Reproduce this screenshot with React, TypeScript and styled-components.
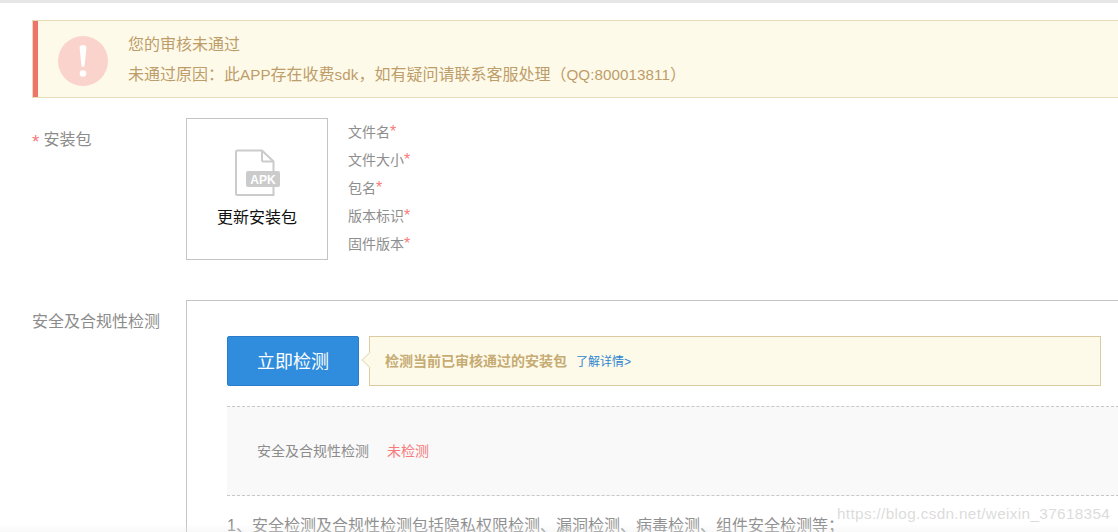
import React from "react";
import styled, { createGlobalStyle } from "styled-components";

const Global = createGlobalStyle`
  html, body { margin: 0; padding: 0; background: #fff; overflow: hidden; }
  body { font-family: "Liberation Sans", "Noto Sans CJK SC", sans-serif; }
  * { box-sizing: border-box; }
`;
const Page = styled.div`
  position: relative; width: 1118px; height: 532px; overflow: hidden;
  border-top: 3px solid #e6e6e6; padding: 17px 0 0 32px;
`;
const Alert = styled.div`
  display: flex; align-items: center; height: 78px; margin-right: -2px;
  background: #fefaea; border: 1px solid #e6dcb8;
  box-shadow: inset 5px 0 0 #ee736d; padding-left: 25px;
`;
const AlertIcon = styled.div`
  width: 50px; height: 50px; border-radius: 50%; background: #fbd3cd; flex: none; margin-top: 4px;
  display: flex; align-items: center; justify-content: center;
`;
const AlertText = styled.div`
  margin-left: 20px; color: #bd9d69; font-size: 16px; line-height: 30px; margin-top: 1px;
`;
const Latin = styled.span`
  font-size: 15.2px;
  letter-spacing: 0.06px;
`;
const Row = styled.div<{ $top: number }>`
  display: flex; margin-top: ${p => p.$top}px;
`;
const Label = styled.div`
  width: 154px; flex: none; color: #8c8c8c; font-size: 16px; line-height: 20px; padding-top: 12px;
`;
const Req = styled.span`
  color: #f77b7b; font-size: 16px; line-height: 1;
`;
const Star = styled.span`
  color: #f77b7b; font-size: 19px; line-height: 1; margin-right: 4px; vertical-align: -3px;
`;
const Upload = styled.div`
  width: 142px; height: 142px; border: 1px solid #c4c4c4; flex: none;
  display: flex; flex-direction: column; align-items: center; padding-top: 30px;
`;
const UploadText = styled.div`
  font-size: 16px; line-height: 20px; color: #111; margin-top: 11px;
`;
const Meta = styled.div`
  margin-left: 20px; padding-top: 0; display: flex; flex-direction: column;
`;
const MetaItem = styled.div`
  height: 28px; line-height: 28px; font-size: 14px; color: #8e8e8e;
`;
const Panel = styled.div`
  flex: 1; height: 240px; margin-right: -2px; border: 1px solid #c4c4c4; border-bottom: 0;
  padding: 35px 0 0 40px;
`;
const Actions = styled.div`
  display: flex; align-items: stretch; height: 50px;
`;
const Primary = styled.button`
  width: 132px; height: 50px; border: 1px solid #2a7ccb; border-radius: 2px; background: #308ddd;
  color: #fff; font: 18px "Liberation Sans", "Noto Sans CJK SC", sans-serif; padding: 0 0 2px; flex: none;
`;
const Hint = styled.div`
  position: relative; margin-left: 10px; width: 732px; background: #fefaea; border: 1px solid #dccba0;
  display: flex; align-items: center; padding: 0 0 2px 15px; font-size: 14px;
  &::before {
    content: ""; position: absolute; left: -6px; top: 17px; width: 11px; height: 11px;
    background: #fefaea; border-left: 1px solid #e6dcb8; border-bottom: 1px solid #e6dcb8;
    transform: rotate(45deg);
  }
`;
const HintText = styled.span`
  color: #c6ab73; font-weight: 700;
`;
const HintLink = styled.a`
  color: #2f86cf; font-size: 12px; margin-left: 9px;
`;
const Status = styled.div`
  display: flex; align-items: center; height: 90px; margin-top: 20px;
  background: #f9f9f9; border-top: 1px dashed #c8c8c8; border-bottom: 1px dashed #c8c8c8;
  padding: 0 0 2px 30px; font-size: 14px; color: #8c8c8c;
`;
const StatusValue = styled.span`
  color: #f77b7b; margin-left: 18px;
`;
const Note = styled.p`
  margin: 15px 0 0; font-size: 16px; line-height: 30px; color: #8f8f8f; white-space: nowrap;
`;
const Watermark = styled.div`
  position: absolute; left: 837px; top: 501px; font-size: 15.3px; line-height: 20px;
  letter-spacing: 0.35px; color: rgba(195, 195, 195, 0.6); white-space: nowrap;
`;
const BottomFade = styled.div`
  position: absolute; left: 0; right: 0; bottom: 0; height: 8px;
  background: linear-gradient(rgba(235,235,235,0), rgba(235,235,235,.35));
  pointer-events: none;
`;

export default function App() {
  return (
    <>
      <Global />
      <Page>
        <Alert>
          <AlertIcon>
            <svg width="8" height="32" viewBox="0 0 8 32">
              <path d="M.6 2.700C.6 1 2 0 4 0s3.400 1 3.400 2.700L5.600 20.500c-.1.900-.7 1.400-1.600 1.400s-1.500-.5-1.600-1.400z" fill="#fff" />
              <circle cx="4" cy="28.500" r="3.300" fill="#fff" />
            </svg>
          </AlertIcon>
          <AlertText>
            <div>您的审核未通过</div>
            <div>未通过原因：此<Latin>APP</Latin>存在收费<Latin>sdk</Latin>，如有疑问请联系客服处理（<Latin>QQ:800013811</Latin>）</div>
          </AlertText>
        </Alert>
        <Row $top={20}>
          <Label><Star>*</Star>安装包</Label>
          <Upload>
            <svg width="46" height="48" viewBox="0 0 46 48">
              <path d="M3.500 1.500h24.500l11.500 11V46H3.500a1.500 1.500 0 0 1-1.500-1.500V3a1.500 1.500 0 0 1 1.500-1.500z" fill="#fff" stroke="#cbcbcb" strokeWidth="2" />
              <path d="M28 1.500V11a1.500 1.500 0 0 0 1.500 1.500h10" fill="none" stroke="#cbcbcb" strokeWidth="2" />
              <rect x="12" y="22" width="34" height="16" rx="2" fill="#cbcbcb" />
              <text x="29" y="34.500" textAnchor="middle" fontSize="12" fontWeight="700" fill="#fff" fontFamily="Liberation Sans, sans-serif">APK</text>
            </svg>
            <UploadText>更新安装包</UploadText>
          </Upload>
          <Meta>
            <MetaItem>文件名<Req>*</Req></MetaItem>
            <MetaItem>文件大小<Req>*</Req></MetaItem>
            <MetaItem>包名<Req>*</Req></MetaItem>
            <MetaItem>版本标识<Req>*</Req></MetaItem>
            <MetaItem>固件版本<Req>*</Req></MetaItem>
          </Meta>
        </Row>
        <Row $top={40}>
          <Label>安全及合规性检测</Label>
          <Panel>
            <Actions>
              <Primary>立即检测</Primary>
              <Hint>
                <HintText>检测当前已审核通过的安装包</HintText>
                <HintLink>了解详情&gt;</HintLink>
              </Hint>
            </Actions>
            <Status>安全及合规性检测<StatusValue>未检测</StatusValue></Status>
            <Note>1、安全检测及合规性检测包括隐私权限检测、漏洞检测、病毒检测、组件安全检测等；</Note>
          </Panel>
        </Row>
        <BottomFade />
        <Watermark>https://blog.csdn.net/weixin_37618354</Watermark>
      </Page>
    </>
  );
}
